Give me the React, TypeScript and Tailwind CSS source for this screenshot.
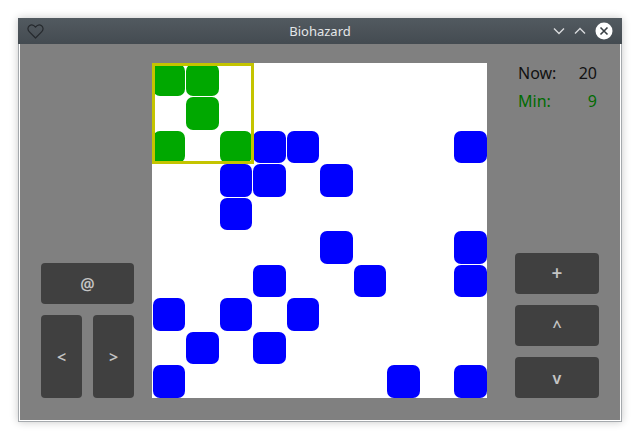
const board = [
  '..........',
  '..........',
  '...BB....B',
  '..BB.B....',
  '..B.......',
  '.....B...B',
  '...B..B..B',
  'B.B.B.....',
  '.B.B......',
  'B......B.B',
];

const piece = ['GG.', '.G.', 'G.G'];

function cellAt(r: number, c: number) {
  if (r < 3 && c < 3 && piece[r][c] === 'G') return 'G';
  return board[r][c];
}

function Btn({ label, className }: { label: string; className: string }) {
  return (
    <div
      className={`flex items-center justify-center rounded-[4px] bg-[#404040] text-[16px] font-semibold text-[#c4c4c4] ${className}`}
    >
      {label}
    </div>
  );
}

export default function App() {
  const cells = [];
  for (let r = 0; r < 10; r++) {
    for (let c = 0; c < 10; c++) {
      const v = cellAt(r, c);
      cells.push(
        <div key={`${r}-${c}`} className="p-[0.5px]">
          {v === 'B' && <div className="h-full w-full rounded-[7px] bg-[#0000ff]" />}
          {v === 'G' && <div className="h-full w-full rounded-[7px] bg-[#00a800]" />}
        </div>
      );
    }
  }

  return (
    <div className="h-[440px] w-[640px] bg-white pl-[18px] pt-[18px] font-['Noto_Sans',sans-serif]">
      <div className="flex h-[404px] w-[604px] flex-col shadow-[0_0_8px_rgba(0,0,0,0.22)]">
        {/* title bar */}
        <div className="relative flex h-[27px] items-center bg-gradient-to-b from-[#525a60] to-[#444b51] px-[9px]">
          <svg width="17" height="15" viewBox="0 0 17 15" className="text-[#25292d]">
            <path
              d="M8.5 14 L2.2 7.6 C0.4 5.8 0.6 3 2.4 1.7 C4.2 0.4 6.8 0.9 8.5 3.2 C10.2 0.9 12.8 0.4 14.6 1.7 C16.4 3 16.6 5.8 14.8 7.6 Z"
              fill="none"
              stroke="currentColor"
              strokeWidth="1.2"
              strokeLinejoin="round"
            />
          </svg>
          <div className="absolute inset-x-0 top-0 flex h-[27px] items-center justify-center text-[13px] text-[#e4e6e8]">
            Biohazard
          </div>
          <div className="ml-auto flex items-center gap-[9px]">
            <svg width="12" height="8" viewBox="0 0 12 8">
              <path d="M1 1.5 L6 6.5 L11 1.5" fill="none" stroke="#d8dadc" strokeWidth="1.4" />
            </svg>
            <svg width="12" height="8" viewBox="0 0 12 8">
              <path d="M1 6.5 L6 1.5 L11 6.5" fill="none" stroke="#d8dadc" strokeWidth="1.4" />
            </svg>
            <svg width="18" height="18" viewBox="0 0 18 18">
              <circle cx="9" cy="9" r="8.5" fill="#ffffff" />
              <path d="M5.5 5.5 L12.5 12.5 M12.5 5.5 L5.5 12.5" stroke="#3a4045" strokeWidth="1.6" />
            </svg>
          </div>
        </div>
        {/* body */}
        <div className="flex-1 border-x border-b border-[#a6aaae] bg-white p-[1px] pt-0">
          <div className="flex h-full bg-[#808080] pb-[22px] pl-[21px] pr-[17px] pt-[19px]">
            <div className="flex w-[93px] flex-col justify-end gap-[11px]">
              <Btn label="@" className="h-[41px] w-full" />
              <div className="flex gap-[11px]">
                <Btn label="<" className="h-[83px] w-[41px]" />
                <Btn label=">" className="h-[83px] w-[41px]" />
              </div>
            </div>
            <div className="relative ml-[18px] h-[335px] w-[335px] bg-white">
              <div className="grid h-full w-full grid-cols-[repeat(10,33.5px)] grid-rows-[repeat(10,33.5px)]">
                {cells}
              </div>
              <div className="absolute left-0 top-0 h-[101px] w-[102px] border-[3px] border-[#c4c400]" />
            </div>
            <div className="ml-[28px] flex w-[84px] flex-col justify-between">
              <div className="flex flex-col gap-[7px] pl-[3px] pr-[2px] text-[16px] leading-[21px]">
                <div className="flex justify-between text-[#111]">
                  <span>Now:</span>
                  <span>20</span>
                </div>
                <div className="flex justify-between text-[#006b00]">
                  <span>Min:</span>
                  <span>9</span>
                </div>
              </div>
              <div className="flex flex-col gap-[11px]">
                <Btn label="+" className="h-[41px] w-full text-[19px]" />
                <Btn label="^" className="h-[41px] w-full" />
                <Btn label="v" className="h-[41px] w-full" />
              </div>
            </div>
          </div>
        </div>
      </div>
    </div>
  );
}
